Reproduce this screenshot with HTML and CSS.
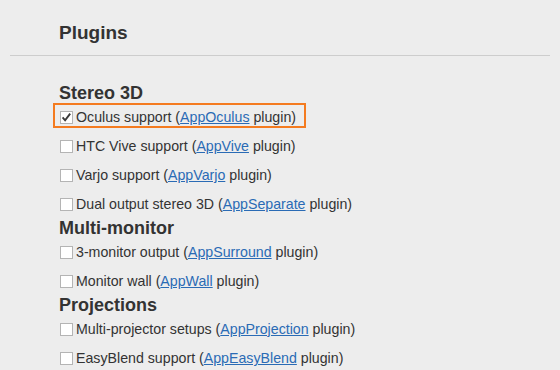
FILE: index.html
```html
<!DOCTYPE html>
<html lang="en">
<head>
  <meta charset="UTF-8">
  <title>Plugins</title>
  <link rel="stylesheet" href="styles.css">
</head>
<body>
  <div class="page">
    <!-- HEADER -->
    <div class="page-header">Plugins</div>

    <div class="plugin-list">
      <!-- STEREO 3D -->
      <div class="group-title">Stereo 3D</div>
      <label class="option option-active">
        <svg class="check" width="13" height="13" viewBox="0 0 13 13">
          <rect x="0.5" y="0.5" width="12" height="12" fill="#fff" stroke="#b4b4b4"/>
          <path d="M2.6 6.4 L5.1 9.3 L10.2 2.6" fill="none" stroke="#3a3a3a" stroke-width="1.9"/>
        </svg>
        <span>Oculus support (<a href="#">AppOculus</a> plugin)</span>
      </label>
      <label class="option">
        <span class="box"></span>
        <span>HTC Vive support (<a href="#">AppVive</a> plugin)</span>
      </label>
      <label class="option">
        <span class="box"></span>
        <span>Varjo support (<a href="#">AppVarjo</a> plugin)</span>
      </label>
      <label class="option">
        <span class="box"></span>
        <span>Dual output stereo 3D (<a href="#">AppSeparate</a> plugin)</span>
      </label>

      <!-- MULTI-MONITOR -->
      <div class="group-title">Multi-monitor</div>
      <label class="option">
        <span class="box"></span>
        <span>3-monitor output (<a href="#">AppSurround</a> plugin)</span>
      </label>
      <label class="option">
        <span class="box"></span>
        <span>Monitor wall (<a href="#">AppWall</a> plugin)</span>
      </label>

      <!-- PROJECTIONS -->
      <div class="group-title">Projections</div>
      <label class="option">
        <span class="box"></span>
        <span>Multi-projector setups (<a href="#">AppProjection</a> plugin)</span>
      </label>
      <label class="option">
        <span class="box"></span>
        <span>EasyBlend support (<a href="#">AppEasyBlend</a> plugin)</span>
      </label>
    </div>
  </div>
</body>
</html>
```

FILE: styles.css
```css
/* VARIABLES */
:root {
  --bg-color: #ededed;
  --text-color: #333333;
  --link-color: #2a6bb5;
  --line-color: #cdcdcd;
  --accent-color: #f47b20;
  --font-family: "Liberation Sans", Arial, sans-serif;
}

*, *::before, *::after {
  box-sizing: border-box;
  margin: 0;
  padding: 0;
}

body {
  background-color: var(--bg-color);
  color: var(--text-color);
  font-family: var(--font-family);
  overflow: hidden;
}

.page {
  padding: 0 10px;
}

/* HEADER */
.page-header {
  font-size: 19px;
  font-weight: bold;
  line-height: 22px;
  padding: 22px 0 11px 49px;
  border-bottom: 1px solid var(--line-color);
}

/* LIST */
.plugin-list {
  padding: 28px 0 0 43px;
}

.group-title {
  font-size: 18px;
  font-weight: bold;
  line-height: 19px;
  margin-left: 6px;
}

.option {
  display: flex;
  align-items: center;
  width: fit-content;
  height: 25px;
  margin-bottom: 4px;
  padding: 4px 8px 0 5px;
  border: 2px solid transparent;
  font-size: 14.2px;
  line-height: 17px;
  cursor: pointer;
}

.option-active {
  border-color: var(--accent-color);
}

.box,
.check {
  flex: none;
  width: 13px;
  height: 13px;
  margin-right: 3px;
}

.box {
  background-color: #fff;
  border: 1px solid #b4b4b4;
}

.option a {
  color: var(--link-color);
  text-decoration: underline;
}
```
